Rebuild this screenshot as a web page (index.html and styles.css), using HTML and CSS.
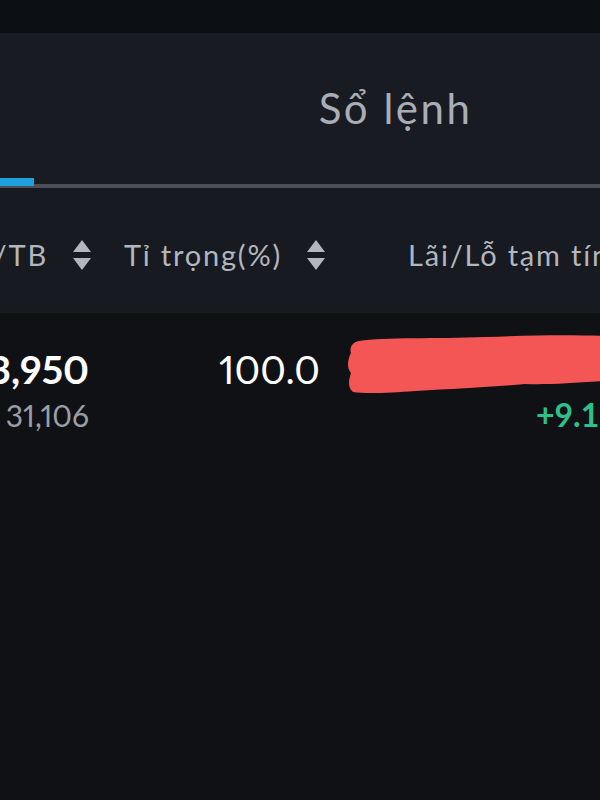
FILE: index.html
```html
<!DOCTYPE html>
<html lang="vi">
<head>
  <meta charset="UTF-8">
  <title>Danh mục</title>
  <link rel="stylesheet" href="styles.css">
</head>
<body>
  <div class="status-strip"></div>

  <div class="tabs">
    <div class="tab active"><span>Danh mục</span></div>
    <div class="tab"><span>Sổ lệnh</span></div>
  </div>

  <div class="table">
    <div class="row head">
      <div class="cell c1">
        <span>Giá vốn/TB</span>
        <svg class="sort" viewBox="0 0 20 32"><path d="M10 1 L19 13 L1 13 Z"/><path d="M1 19 L19 19 L10 31 Z"/></svg>
      </div>
      <div class="cell c2">
        <span>Tỉ trọng(%)</span>
        <svg class="sort" viewBox="0 0 20 32"><path d="M10 1 L19 13 L1 13 Z"/><path d="M1 19 L19 19 L10 31 Z"/></svg>
      </div>
      <div class="cell c3">
        <span>Lãi/Lỗ tạm tính</span>
      </div>
    </div>

    <div class="row body">
      <div class="cell c1">
        <span class="main">23,950</span>
        <span class="sub">31,106</span>
      </div>
      <div class="cell c2">
        <span class="main light">100.0</span>
      </div>
      <div class="cell c3">
        <svg class="redact" viewBox="0 0 260 62" preserveAspectRatio="none">
          <path d="M14 8 C40 4 90 6 140 4 C190 2 230 2 260 3 L260 48 C230 50 200 52 180 51 C150 54 110 56 70 58 C45 60 20 61 8 59 C2 54 4 46 6 40 C1 34 3 26 6 20 C4 14 8 9 14 8 Z"/>
        </svg>
        <span class="pnl">+9.15%</span>
      </div>
    </div>
  </div>
</body>
</html>
```

FILE: styles.css
```css
* { box-sizing: border-box; }
html, body { margin: 0; padding: 0; }
body {
  width: 600px;
  height: 800px;
  overflow: hidden;
  background: #0f1115;
  font-family: Lato, "Noto Sans", sans-serif;
}

.status-strip { height: 33px; background: #0c0f13; }

.tabs {
  display: flex;
  height: 155px;
  background: #181b22;
  border-bottom: 4px solid #4b4f56;
  margin-left: -230px;
}
.tab {
  flex: 1;
  display: flex;
  align-items: center;
  justify-content: center;
  padding-bottom: 2px;
  padding-left: 6px;
  font-size: 42px;
  letter-spacing: 2.5px;
  color: #a9adb5;
  position: relative;
}
.tab.active::after {
  content: "";
  position: absolute;
  left: 50%;
  width: 112px;
  transform: translateX(-50%);
  bottom: -2px;
  height: 8px;
  background: #1fa0dc;
}
.tab.active span { visibility: hidden; }

.table { overflow: hidden; }
.row { display: grid; grid-template-columns: 92px 234px 1fr; }

.head {
  height: 125px;
  background: #171a21;
  align-items: center;
  padding-top: 8px;
  font-size: 29px;
  letter-spacing: 1.8px;
  color: #b2b6bd;
}
.cell { display: flex; white-space: nowrap; }
.head .c1, .head .c2 { justify-content: flex-end; align-items: center; gap: 24px; }
.head .c3 { padding-left: 82px; }
.sort { width: 20px; height: 32px; fill: #b2b6bd; flex: none; }

.body { padding-top: 36px; }
.body .c1, .body .c2 { flex-direction: column; align-items: flex-end; }
.body .c1 { padding-right: 3px; }
.body .c2 { padding-right: 6px; }
.main {
  font-size: 39px;
  line-height: 40px;
  color: #ffffff;
  font-weight: 700;
  font-variant-numeric: proportional-nums;
}
.main.light { font-weight: 400; }
.sub {
  font-size: 30px;
  line-height: 36px;
  color: #9a9ea6;
  margin-top: 8px;
  font-variant-numeric: proportional-nums;
}

.body .c3 { flex-direction: column; }
.redact { width: 260px; height: 62px; margin-left: 19px; margin-top: -16px; fill: #f45656; }
.pnl {
  margin-left: 210px;
  margin-top: 2px;
  font-size: 32px;
  line-height: 36px;
  font-weight: 700;
  color: #2ec08a;
}
```
